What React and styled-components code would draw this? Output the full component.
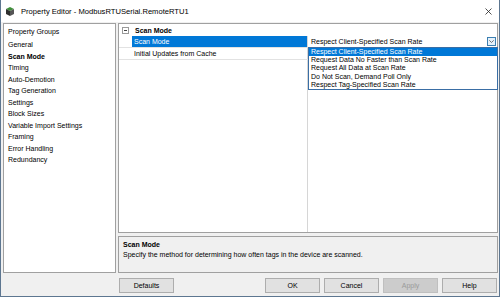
import React from 'react'
import styled, { createGlobalStyle } from 'styled-components'

const GlobalStyle = createGlobalStyle`
  html, body {
    margin: 0;
    padding: 0;
    background: #f0f0f0;
  }
  body {
    font-family: "Liberation Sans", Arial, sans-serif;
    color: #000;
  }
`;

const Window = styled.div`
  width: 500px;
  height: 297px;
  box-sizing: border-box;
  border: 1px solid #5d7690;
  border-top: none;
  background: #f0f0f0;
  display: flex;
  flex-direction: column;
`;

const TitleBar = styled.div`
  height: 22px;
  flex: none;
  background: #fff;
  display: flex;
  align-items: center;
  padding-left: 5px;
`;

const Title = styled.span`
  margin-left: 7px;
  font-size: 7.6px;
  color: #000;
`;

const Close = styled.div`
  margin-left: auto;
  margin-right: 7px;
  display: flex;
`;

const Body = styled.div`
  display: flex;
  gap: 2px;
  padding: 1px 1px 0 2px;
`;

const LeftPanel = styled.div`
  width: 113px;
  height: 250px;
  box-sizing: border-box;
  background: #fff;
  border: 1px solid #a0a0a0;
  padding: 2px 0 0 4px;
  font-size: 7px;
`;

const GroupHeader = styled.div`
  line-height: 11.5px;
  margin-bottom: 1.5px;
`;

const GroupItem = styled.div`
  line-height: 11.5px;
  font-weight: ${p => (p.$bold ? 700 : 400)};
`;

const RightColumn = styled.div`
  width: 380px;
  display: flex;
  flex-direction: column;
`;

const Grid = styled.div`
  height: 210px;
  box-sizing: border-box;
  background: #fff;
  border: 1px solid #a0a0a0;
  display: flex;
  flex-direction: column;
  font-size: 7px;
`;

const CategoryRow = styled.div`
  height: 12px;
  display: flex;
  align-items: center;
  padding-left: 3px;
  font-weight: 700;
`;

const MinusBox = styled.div`
  width: 5px;
  height: 5px;
  border: 1px solid #9a9a9a;
  margin-right: 6px;
  display: flex;
  align-items: center;
  justify-content: center;
  &::after {
    content: "";
    width: 3px;
    height: 1px;
    background: #444;
  }
`;

const Row = styled.div`
  height: 11px;
  display: flex;
  border-bottom: 1px solid #e2e2e2;
`;

const Gutter = styled.div`
  width: 13px;
  flex: none;
`;

const LabelCell = styled.div`
  width: 176px;
  flex: none;
  box-sizing: border-box;
  padding-left: 2px;
  display: flex;
  align-items: center;
  border-right: 1px solid #d6d6d6;
  background: ${p => (p.$selected ? '#0078d7' : 'transparent')};
  color: ${p => (p.$selected ? '#fff' : '#000')};
`;

const ValueCell = styled.div`
  flex: 1;
  position: relative;
  display: flex;
  align-items: center;
  padding-left: 3px;
`;

const DropButton = styled.div`
  margin-left: auto;
  margin-right: 1px;
  width: 9px;
  height: 9px;
  box-sizing: border-box;
  background: #e5f1fb;
  border: 1px solid #3c7fb1;
  display: flex;
  align-items: center;
  justify-content: center;
`;

const DropList = styled.div`
  position: absolute;
  top: 11px;
  left: 0;
  right: -1px;
  background: #fff;
  border: 1px solid #3a6ea5;
  z-index: 2;
`;

const DropItem = styled.div`
  height: 8.2px;
  line-height: 8.2px;
  padding-left: 2px;
  background: ${p => (p.$selected ? '#0078d7' : '#fff')};
  color: ${p => (p.$selected ? '#fff' : '#000')};
  white-space: nowrap;
`;

const Filler = styled.div`
  flex: 1;
  display: flex;
`;

const FillerLabel = styled.div`
  width: 176px;
  flex: none;
  box-sizing: border-box;
  border-right: 1px solid #d6d6d6;
`;

const Description = styled.div`
  margin-top: 3px;
  height: 37px;
  box-sizing: border-box;
  border: 1px solid #a0a0a0;
  background: #f0f0f0;
  padding: 3px 0 0 4px;
  font-size: 7px;
`;

const DescTitle = styled.div`
  font-weight: 700;
  line-height: 9px;
  margin-bottom: 1px;
`;

const DescText = styled.div`
  line-height: 9px;
`;

const ButtonRow = styled.div`
  margin-top: 5px;
  display: flex;
  gap: 4px;
  padding: 0 1px;
`;

const Button = styled.div`
  width: 55px;
  height: 15px;
  box-sizing: border-box;
  background: ${p => (p.$disabled ? '#cccccc' : '#e1e1e1')};
  border: 1px solid ${p => (p.$disabled ? '#bfbfbf' : '#adadad')};
  color: ${p => (p.$disabled ? '#9a9a9a' : '#000')};
  font-size: 7px;
  display: flex;
  align-items: center;
  justify-content: center;
  margin-left: ${p => (p.$push ? 'auto' : '0')};
`;

const groups = [
  'General', 'Scan Mode', 'Timing', 'Auto-Demotion', 'Tag Generation', 'Settings',
  'Block Sizes', 'Variable Import Settings', 'Framing', 'Error Handling', 'Redundancy',
];

const scanOptions = [
  'Respect Client-Specified Scan Rate',
  'Request Data No Faster than Scan Rate',
  'Request All Data at Scan Rate',
  'Do Not Scan, Demand Poll Only',
  'Respect Tag-Specified Scan Rate',
];

const AppIcon = () => (
  <svg width="8" height="9" viewBox="0 0 8 9">
    <polygon points="0,2 4,0 8,2 4,4" fill="#3f8f3a" />
    <polygon points="0,2 4,4 4,9 0,7" fill="#2e2e2e" />
    <polygon points="4,4 8,2 8,7 4,9" fill="#555" />
  </svg>
);

const App = () => {
  return (
    <Window>
      <GlobalStyle />
      <TitleBar>
        <AppIcon />
        <Title>Property Editor - ModbusRTUSerial.RemoteRTU1</Title>
        <Close>
          <svg width="7" height="7" viewBox="0 0 7 7">
            <path d="M0.5 0.5 L6.5 6.5 M6.5 0.5 L0.5 6.5" stroke="#222" strokeWidth="0.8" />
          </svg>
        </Close>
      </TitleBar>
      <Body>
        <LeftPanel>
          <GroupHeader>Property Groups</GroupHeader>
          {groups.map(g => (
            <GroupItem key={g} $bold={g === 'Scan Mode'}>{g}</GroupItem>
          ))}
        </LeftPanel>
        <RightColumn>
          <Grid>
            <CategoryRow>
              <MinusBox />
              Scan Mode
            </CategoryRow>
            <Row>
              <Gutter />
              <LabelCell $selected>Scan Mode</LabelCell>
              <ValueCell>
                Respect Client-Specified Scan Rate
                <DropButton>
                  <svg width="5" height="3" viewBox="0 0 5 3">
                    <path d="M0.3 0.3 L2.5 2.5 L4.7 0.3" stroke="#555" strokeWidth="0.8" fill="none" />
                  </svg>
                </DropButton>
                <DropList>
                  {scanOptions.map((o, i) => (
                    <DropItem key={o} $selected={i === 0}>{o}</DropItem>
                  ))}
                </DropList>
              </ValueCell>
            </Row>
            <Row>
              <Gutter />
              <LabelCell>Initial Updates from Cache</LabelCell>
              <ValueCell />
            </Row>
            <Filler>
              <Gutter />
              <FillerLabel />
            </Filler>
          </Grid>
          <Description>
            <DescTitle>Scan Mode</DescTitle>
            <DescText>Specify the method for determining how often tags in the device are scanned.</DescText>
          </Description>
          <ButtonRow>
            <Button>Defaults</Button>
            <Button $push>OK</Button>
            <Button>Cancel</Button>
            <Button $disabled>Apply</Button>
            <Button>Help</Button>
          </ButtonRow>
        </RightColumn>
      </Body>
    </Window>
  )
}

export default App
